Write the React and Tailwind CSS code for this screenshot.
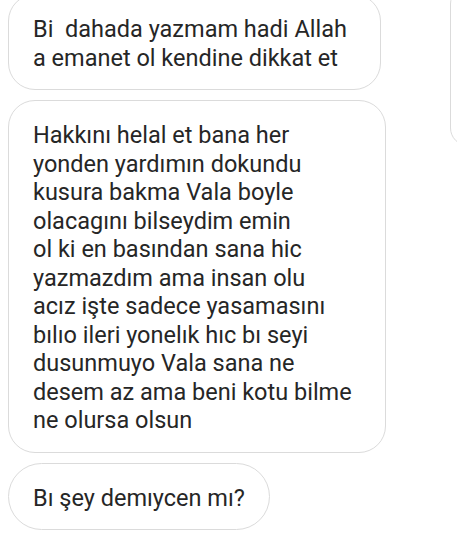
import React from 'react';

const bubble =
  'shrink-0 border border-[#dbdbdb] bg-white pl-6 pt-5 pb-[17px] text-[23.5px] leading-[28.5px] text-[#262626]';

const long = [
  'Hakkını helal et bana her',
  'yonden yardımın dokundu',
  'kusura bakma Vala boyle',
  'olacagını bilseydim emin',
  'ol ki en basından sana hic',
  'yazmazdım ama insan olu',
  'acız işte sadece yasamasını',
  'bılıo ileri yonelık hıc bı seyi',
  'dusunmuyo Vala sana ne',
  'desem az ama beni kotu bilme',
  'ne olursa olsun',
];

export default function App() {
  return (
    <div
      className="flex h-[539px] w-full items-start overflow-hidden bg-white"
      style={{ fontFamily: 'Roboto, "Noto Sans", sans-serif' }}
    >
      <div className="-mt-[6px] flex shrink-0 flex-col items-start gap-[10px] pl-2">
        <div className={`${bubble} w-[373px] whitespace-pre rounded-[27px]`}>
          {'Bi  dahada yazmam hadi Allah\na emanet ol kendine dikkat et'}
        </div>
        <div className={`${bubble} w-[378px] rounded-[27px]`}>
          {long.map((line) => (
            <div key={line} className="whitespace-nowrap">{line}</div>
          ))}
        </div>
        <div className={`${bubble} rounded-full pr-6`}>Bı şey demıycen mı?</div>
      </div>
      <div className="-mt-[14px] ml-[64px] h-[160px] w-[200px] shrink-0 rounded-[18px] border border-[#dbdbdb]" />
    </div>
  );
}
